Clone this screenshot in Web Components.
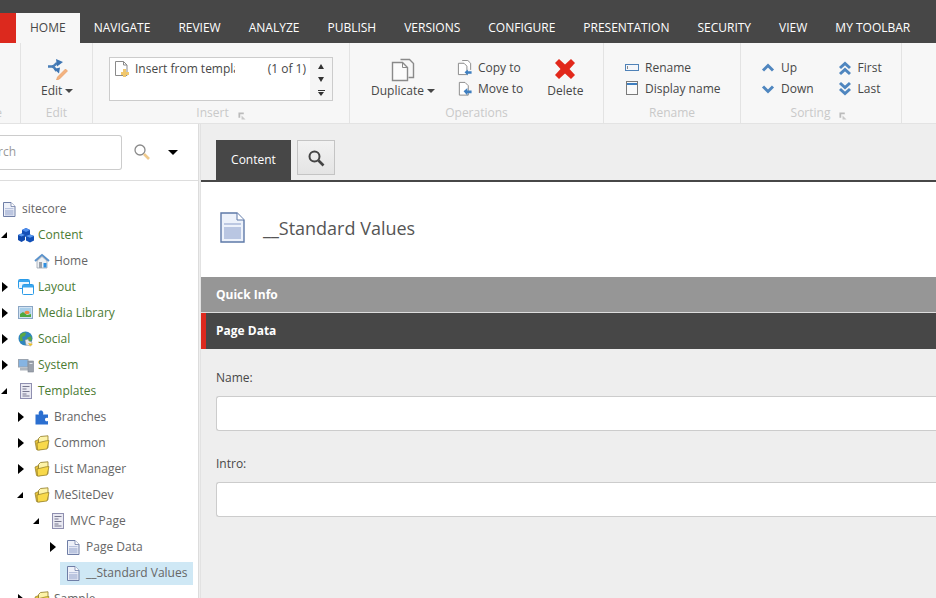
<!DOCTYPE html>
<html lang="en"><head><meta charset="utf-8"><title>Content Editor</title>
<style>
html,body{margin:0;height:100%;overflow:hidden;background:#eee}
body{font:12px/16px "Open Sans",sans-serif;color:#474747}
sc-app{height:598px}
</style></head><body>
<sc-app>
  <sc-tabbar slot="tabs">
    <sc-tab active>HOME</sc-tab><sc-tab>NAVIGATE</sc-tab><sc-tab>REVIEW</sc-tab><sc-tab>ANALYZE</sc-tab><sc-tab>PUBLISH</sc-tab><sc-tab>VERSIONS</sc-tab><sc-tab>CONFIGURE</sc-tab><sc-tab>PRESENTATION</sc-tab><sc-tab>SECURITY</sc-tab><sc-tab>VIEW</sc-tab><sc-tab>MY TOOLBAR</sc-tab>
  </sc-tabbar>
  <sc-ribbon slot="ribbon">
    <sc-group label="Write" w="21" clip></sc-group>
    <sc-group label="Edit" w="72" pad="20">
      <sc-big icon="edit" drop>Edit</sc-big>
    </sc-group>
    <sc-group label="Insert" w="257" launcher pad="16"><sc-gallery></sc-gallery></sc-group>
    <sc-group label="Operations" w="254" pad="21" gap="22">
      <sc-big icon="duplicate" drop>Duplicate</sc-big>
      <sc-col><sc-small icon="copyto">Copy to</sc-small><sc-small icon="moveto">Move to</sc-small></sc-col>
      <sc-big icon="delete" style="margin-left:2px">Delete</sc-big>
    </sc-group>
    <sc-group label="Rename" w="137" pad="20">
      <sc-col><sc-small icon="rename">Rename</sc-small><sc-small icon="display">Display name</sc-small></sc-col>
    </sc-group>
    <sc-group label="Sorting" w="161" launcher lshift="4" pad="19" gap="23">
      <sc-col><sc-small icon="up">Up</sc-small><sc-small icon="down">Down</sc-small></sc-col>
      <sc-col><sc-small icon="first">First</sc-small><sc-small icon="last">Last</sc-small></sc-col>
    </sc-group>
  </sc-ribbon>
  <sc-sidebar slot="side">
    <sc-node icon="doc" label="sitecore" flat>
      <sc-node icon="cubes" label="Content" open root>
        <sc-node icon="home" label="Home"></sc-node>
      </sc-node>
      <sc-node icon="layout" label="Layout" closed root></sc-node>
      <sc-node icon="media" label="Media Library" closed root></sc-node>
      <sc-node icon="globe" label="Social" closed root></sc-node>
      <sc-node icon="system" label="System" closed root></sc-node>
      <sc-node icon="template" label="Templates" open root>
        <sc-node icon="puzzle" label="Branches" closed></sc-node>
        <sc-node icon="folder" label="Common" closed></sc-node>
        <sc-node icon="folder" label="List Manager" closed></sc-node>
        <sc-node icon="folder" label="MeSiteDev" open>
          <sc-node icon="template" label="MVC Page" open>
            <sc-node icon="doc" label="Page Data" closed></sc-node>
            <sc-node icon="doc" label="__Standard Values" selected></sc-node>
          </sc-node>
        </sc-node>
        <sc-node icon="folder" label="Sample" closed></sc-node>
      </sc-node>
    </sc-node>
  </sc-sidebar>
  <sc-editor slot="main">
    <sc-section kind="quick">Quick Info</sc-section>
    <sc-section kind="active">Page Data</sc-section>
    <sc-fields>
      <sc-field label="Name:"></sc-field>
      <sc-field label="Intro:"></sc-field>
    </sc-fields>
  </sc-editor>
</sc-app>
<script>
const ICONS={
edit:'<svg width="21" height="22" viewBox="1 0 21 22"><path d="M2 8.500h4c2 0 3-2 5-3.500" fill="none" stroke="#4a7fb8" stroke-width="2.600"/><path d="M6 8.500c2 0 3 2 4.500 4.500" fill="none" stroke="#4a7fb8" stroke-width="2.600"/><path d="M10 1l7 3-6 4.500zM8 11l6-1.500-1 6z" fill="#3f76b3"/><path d="M19.500 11l2 2-8 8-3 1 1-3z" fill="#f3b27f" stroke="#e59a5e" stroke-width=".6"/></svg>',
duplicate:'<svg width="24" height="24" viewBox="0 0 24 24"><path d="M9.500 1.500h9l4 4v14h-5" fill="#f7f7f7" stroke="#8a8a8a" stroke-width="1.400"/><path d="M1.500 4.500h10l5 5v13h-15z" fill="#fbfbfb" stroke="#8a8a8a" stroke-width="1.400"/><path d="M11.500 4.500v5h5" fill="none" stroke="#8a8a8a"/></svg>',
copyto:'<svg width="16" height="16" viewBox="0 0 17 17"><path d="M5.500 .5h6l3 3v7" fill="#fff" stroke="#888"/><path d="M1.500 3.500h6l3 3v9h-9z" fill="#fff" stroke="#888"/><path d="M8 13l3.500-3v2h4v2.500h-4v2z" fill="#3f7fc0"/></svg>',
moveto:'<svg width="16" height="16" viewBox="0 0 17 17"><path d="M2.500 1.500h6l3.500 3.500v10h-9.500z" fill="#fff" stroke="#888"/><path d="M7 11l4-3.500V10h4.500v3H11v2.500z" fill="#3f7fc0"/></svg>',
delete:'<svg width="22" height="22" viewBox="0 0 22 22"><path d="M5 1l6 5.500L17 1l4 4-5.500 6 5.500 6-4 4-6-5.500L5 21l-4-4 5.500-6L1 5z" fill="#e2281b"/></svg>',
rename:'<svg width="16" height="16" viewBox="0 0 16 16"><rect x="1.500" y="4.500" width="13" height="6" fill="#f4f6fa" stroke="#4f82b8"/><path d="M3.500 6v3" stroke="#888"/></svg>',
display:'<svg width="16" height="16" viewBox="0 0 16 16"><rect x="2.500" y=".5" width="11" height="13" fill="#fafafa" stroke="#7a7a7a"/><rect x="3" y="2" width="10" height="2" fill="#3f7fc0"/></svg>',
up:'<svg width="16" height="16" viewBox="0 0 16 16"><path d="M3 10.500L8 5.500l5 5" fill="none" stroke="#4f86bf" stroke-width="3"/></svg>',
down:'<svg width="16" height="16" viewBox="0 0 16 16"><path d="M3 5.500L8 10.500l5-5" fill="none" stroke="#4f86bf" stroke-width="3"/></svg>',
first:'<svg width="16" height="16" viewBox="0 0 16 16"><path d="M3 8L8 3.500 13 8M3 14L8 9.500 13 14" fill="none" stroke="#4f86bf" stroke-width="3"/></svg>',
last:'<svg width="16" height="16" viewBox="0 0 16 16"><path d="M3 2L8 6.500 13 2M3 8L8 12.500 13 8" fill="none" stroke="#4f86bf" stroke-width="3"/></svg>',
doc:'<svg width="16" height="16" viewBox="0 0 16 16"><path d="M1.500 1.500h7.500l4 4v10H1.500z" fill="#eef1f9" stroke="#6f7ea6"/><path d="M9 1.500v4h4" fill="#fff" stroke="#6f7ea6" stroke-width=".8"/><rect x="3" y="7" width="8.500" height="1.200" fill="#b9c3de"/><rect x="3" y="9" width="8.500" height="5.500" fill="#bcc6e0"/></svg>',
cubes:'<svg width="16" height="16" viewBox="0 0 16 16"><path d="M4 3l4-2 4 2v5l-4 2-4-2z" fill="#1450b8"/><path d="M4 3l4 2 4-2-4-2z" fill="#4f8fee"/><path d="M0 8l3.500-1.500L7 8v5l-3.500 2L0 13z" fill="#0f49ad"/><path d="M0 8l3.500 1.500L7 8 3.500 6.500z" fill="#5a99f0"/><path d="M8 9l4-1.500L16 9v4.500L12 15.500l-4-2z" fill="#1150b8"/><path d="M8 9l4 1.800L16 9l-4-1.500z" fill="#5a99f0"/></svg>',
home:'<svg width="16" height="16" viewBox="0 0 16 16"><path d="M1 8l7-6 7 6" fill="none" stroke="#5b93cc" stroke-width="2"/><path d="M3 8l5-4.500L13 8v7H3z" fill="#eef1f4" stroke="#8d9aa8" stroke-width=".7"/><rect x="5" y="9" width="3" height="6" fill="#9aa2ab"/><rect x="9.500" y="10" width="3" height="4.500" fill="#2f8fe0"/></svg>',
layout:'<svg width="16" height="16" viewBox="0 0 16 16"><rect x=".5" y=".5" width="11" height="9" rx="1" fill="#eaf6fe" stroke="#2a9be8"/><rect x="1" y="1" width="10" height="2" fill="#3aa6ee"/><rect x="4.500" y="5.500" width="11" height="10" rx="1" fill="#fff" stroke="#2a9be8"/><rect x="5" y="6" width="10" height="2.500" fill="#3aa6ee"/></svg>',
media:'<svg width="16" height="16" viewBox="0 0 16 16"><rect x=".5" y="1.500" width="14" height="12" fill="#d2e3f3" stroke="#8aa6c4"/><rect x="2" y="3" width="11" height="6" fill="#a9cfea"/><path d="M2 12V9l3-2 4 3 4-1v3z" fill="#4fa83f"/><ellipse cx="9" cy="7.500" rx="2.500" ry="1.800" fill="#f0873a"/></svg>',
globe:'<svg width="16" height="16" viewBox="0 0 16 16"><circle cx="7.500" cy="7.500" r="7" fill="#2f86bd"/><path d="M2 4c2-2 4-3 6-2l-1 3-3 1 1 4-3 0zM9 7l4-2 1 4-4 2z" fill="#5aa845"/><path d="M7 9l3-1 1 2 3 1-1 4-5-1z" fill="#e8e8e8" stroke="#8a8a8a" stroke-width=".5"/><path d="M10 12l5 1-3 2z" fill="#f2c21f"/></svg>',
system:'<svg width="16" height="16" viewBox="0 0 16 16"><rect x=".5" y="2.500" width="9.500" height="7.500" fill="#86b4e2" stroke="#9aa4b0"/><rect x="2" y="10.500" width="8" height="3" fill="#b0b6bd"/><rect x="10" y="4" width="5.500" height="11" fill="#9aa1ab" stroke="#7c8490" stroke-width=".6"/><rect x="11.500" y="6" width="3" height="1" fill="#dfe3e8"/></svg>',
template:'<svg width="16" height="16" viewBox="0 0 16 16"><rect x="2.500" y=".5" width="11" height="15" fill="#e9e9f2" stroke="#8f8fb0"/><path d="M4.500 3.500h7M4.500 6h4M4.500 8.500h7M4.500 11h4M4.500 13h7" stroke="#77778f"/></svg>',
puzzle:'<svg width="16" height="16" viewBox="0 0 16 16"><path d="M1.500 5.500h3.500c-1-2 .5-4 2-4s3 2 2 4h5V9c-2-.8-3 .2-3 1.500s1 2.300 3 1.500v3.500H1.500z" fill="#2b6fd0"/></svg>',
folder:'<svg width="16" height="16" viewBox="0 0 16 16"><path d="M1 6l3.500-1.500V14.500H2.500z" fill="#e5c23a" stroke="#8f7a25" stroke-width=".7"/><path d="M4.500 3.500l2-2 7.500-.7v12l-9.500 2.200z" fill="#fdf3a8" stroke="#8f7a25" stroke-width=".8"/><path d="M3 8l9-2.200 3-.2-2 8.400-9.500 1.200z" fill="#f8d94a" stroke="#8f7a25" stroke-width=".7"/></svg>',
insert:'<svg width="16" height="16" viewBox="0 0 16 16"><path d="M1.500 .5h8l3.500 3.500v10.500H1.500z" fill="#fff" stroke="#8a8a8a"/><path d="M9.500 .5V4H13" fill="none" stroke="#8a8a8a"/><path d="M9 8h3v3h3v3h-3v2H9v-2H7v-3h2z" fill="#f0c76d"/></svg>',
launcher:'<svg width="8" height="8" viewBox="0 0 9 9"><path d="M.5 .5h6v2h-4v4h-2z" fill="#bbb"/><path d="M4 4l4.500 4.500H4z" fill="#c9c9c9"/></svg>',
search:'<svg width="18" height="18" viewBox="0 0 18 18"><circle cx="7" cy="7" r="5" fill="#fff" fill-opacity=".4" stroke="#8a8a8a" stroke-width="1.300"/><path d="M11 11l5 5" stroke="#efc98c" stroke-width="2.600"/></svg>',
searchdark:'<svg width="18" height="18" viewBox="0 0 18 18"><circle cx="7.500" cy="7.500" r="5" fill="none" stroke="#444" stroke-width="2"/><path d="M11.500 11.500l5 5" stroke="#444" stroke-width="2.600"/></svg>',
bigdoc:'<svg width="25" height="31" viewBox="0 0 25 31"><path d="M1 1h16l7 7v22H1z" fill="#edf2fb" stroke="#5e79a8" stroke-width="1.400"/><path d="M17 1v7h7" fill="#fff" stroke="#5e79a8"/><rect x="4" y="11" width="17" height="2" fill="#bcc8e2"/><rect x="4" y="15" width="17" height="12" fill="#b9c6e2"/></svg>'
};
function def(name,css,html,extra){
  customElements.define(name,class extends HTMLElement{
    constructor(){super();this.attachShadow({mode:'open'})}
    connectedCallback(){
      this.shadowRoot.innerHTML='<style>'+css+'</style>'+(typeof html==='function'?html(this):html);
      if(extra)extra(this);
    }
  });
}
const a=(e,n,d='')=>e.getAttribute(n)??d;
def('sc-app',`:host{display:grid;grid-template-rows:13px 30px 81px 1fr;grid-template-columns:198px 3px 1fr;overflow:hidden}
.top{grid-column:1/4;background:#474747}
.tabs{grid-column:1/4}.rib{grid-column:1/4}
.split{background:linear-gradient(90deg,#dcdcdc 0 1px,#eee 1px 2px,#e2e2e2 2px)}
.side{min-width:0;overflow:hidden;background:#fff}.main{min-width:0;overflow:hidden}`,
`<div class="top"></div><div class="tabs"><slot name="tabs"></slot></div><div class="rib"><slot name="ribbon"></slot></div><div class="side"><slot name="side"></slot></div><div class="split"></div><div class="main"><slot name="main"></slot></div>`);
def('sc-tabbar',`:host{display:flex;height:30px;background:#474747}.logo{width:16px;background:#dc291e}`,`<div class="logo"></div><slot></slot>`);
def('sc-tab',`:host{display:flex;align-items:center;padding:0 14px;color:#fff;font-size:12px;white-space:nowrap}
:host([active]){background:#f7f7f7;color:#474747}`,`<slot></slot>`);
def('sc-ribbon',`:host{display:flex;height:81px;box-sizing:border-box;background:#f7f7f7;border-bottom:1px solid #e3e3e3}`,`<slot></slot>`);
def('sc-group',`:host{display:flex;flex-direction:column;flex:none;box-sizing:border-box;border-right:1px solid #e3e3e3;height:80px;overflow:hidden}
.c{flex:1;display:flex;align-items:flex-start;padding-top:14px;min-height:0}
.l{height:18px;flex:none;display:flex;justify-content:center;align-items:flex-start;gap:9px;color:#c9c9c9;font-size:12px;line-height:16px;white-space:nowrap}
.l.clip{justify-content:flex-end;padding-right:18px}
.l span{flex:none}
svg{margin-top:7px;flex:none}`,
e=>`<div class="c" style="padding-left:${a(e,'pad','0')}px;gap:${a(e,'gap','0')}px"><slot></slot></div><div class="l${e.hasAttribute('clip')?' clip':''}" style="margin-right:${a(e,'lshift','0')}px"><span>${a(e,'label')}</span>${e.hasAttribute('launcher')?ICONS.launcher:''}</div>`,
e=>{e.style.width=a(e,'w')+'px'});
def('sc-big',`:host{display:flex;flex-direction:column;align-items:center;white-space:nowrap;color:#474747}
.i{height:25px;display:flex;justify-content:center;align-items:flex-start;margin-top:1px}
.t{display:flex;align-items:center;gap:3px;height:16px}
.d{width:0;height:0;border:4px solid transparent;border-top-color:#474747;border-bottom:0}`,
e=>`<div class="i">${ICONS[a(e,'icon')]}</div><div class="t"><slot></slot>${e.hasAttribute('drop')?'<span class="d"></span>':''}</div>`);
def('sc-col',`:host{display:flex;flex-direction:column;gap:5px;padding-top:3px}`,`<slot></slot>`);
def('sc-small',`:host{display:flex;align-items:center;gap:5px;height:16px;white-space:nowrap;color:#474747}svg{display:block}`,
e=>`${ICONS[a(e,'icon')]}<slot></slot>`);
def('sc-gallery',`:host{display:flex;width:224px;height:44px;box-sizing:border-box;border:1px solid #ccc;background:#fff}
.m{flex:1;display:flex;padding:2px 1px 0 4px;min-width:0}
.n{width:100px;overflow:hidden;white-space:nowrap;margin-left:5px;line-height:17px}
.p{margin-left:auto;white-space:nowrap;padding-right:3px;line-height:17px}
svg{flex:none;margin-top:1px}
.s{width:22px;background:#f5f5f5;display:flex;flex-direction:column;align-items:center;gap:8px;padding-top:6px;box-sizing:border-box}
.u,.v{width:0;height:0;border:3.500px solid transparent}
.u{border-bottom:5px solid #333;border-top:0}.v{border-top:5px solid #333;border-bottom:0}
.e{width:7px;border-top:1px solid #333;position:relative;height:5px}
.e:after{content:"";position:absolute;left:0;top:1px;border:3.500px solid transparent;border-top:4px solid #333;border-bottom:0}`,
`<div class="m">${ICONS.insert}<span class="n">Insert from template</span><span class="p">(1 of 1)</span></div><div class="s"><span class="u"></span><span class="v"></span><span class="e"></span></div>`);
def('sc-sidebar',`:host{display:block;height:100%;background:#fff}
.b{display:flex;align-items:center;height:57px;box-sizing:border-box;border-bottom:1px solid #ddd}
.inp{flex:none;width:122px;height:35px;box-sizing:border-box;border:1px solid #ccc;border-left:0;border-radius:0 3px 3px 0;display:flex;align-items:center;justify-content:flex-end;overflow:hidden;color:#999;padding-right:105px}
.inp span{flex:none}
.g{margin-left:11px;display:flex}
.d{margin-left:17px;width:0;height:0;border:5px solid transparent;border-top:5px solid #000;border-bottom:0}
.t{padding:15px 0 0 2px}`,
`<div class="b"><div class="inp"><span>Search</span></div><div class="g">${ICONS.search}</div><div class="d"></div></div><div class="t"><slot></slot></div>`);
def('sc-node',`:host{display:block}
.r{display:flex;align-items:center;height:26px;white-space:nowrap}
.tg{flex:none;width:16px;margin-left:-16px;display:flex;align-items:center;height:26px}
.ri{width:0;height:0;border:5px solid transparent;border-left:6px solid #000;border-right:0}
.op{width:0;height:0;border-style:solid;border-width:0 0 6px 6px;border-color:transparent transparent #000 transparent;margin-left:-1px}
.w{display:flex;align-items:center;gap:4px;height:23px;margin-left:-6px;padding:0 6px;color:#666}
:host([root]) .w{color:#4b7b33}
:host([selected]) .w{background:#cfe8f5}
svg{flex:none;display:block}
.k{padding-left:16px}`,
e=>`<div class="r"><span class="tg">${e.hasAttribute('closed')?'<span class="ri"></span>':e.hasAttribute('open')?'<span class="op"></span>':''}</span><div class="w">${ICONS[a(e,'icon')]}<span>${a(e,'label')}</span></div></div><div class="k"><slot></slot></div>`);
def('sc-editor',`:host{display:block;height:100%;background:#eee}
.st{display:flex;align-items:flex-start;gap:6px;box-sizing:border-box;padding:16px 0 0 15px;border-bottom:2px solid #474747;height:58px}
.c{width:75px;height:40px;background:#474747;color:#fff;display:flex;align-items:center;justify-content:center}
.s{width:38px;height:35px;box-sizing:border-box;border:1px solid #c4c4c4;background:linear-gradient(#f2f2f2,#e4e4e4);display:flex;align-items:center;justify-content:center}
.h{height:95px;background:#fff;display:flex;align-items:center;gap:18px;padding-left:19px;box-sizing:border-box;font-size:18px;color:#555}
.h svg{flex:none;margin-top:-4px}.h span{margin-top:-4px;line-height:24px}`,
`<div class="st"><div class="c">Content</div><div class="s">${ICONS.searchdark}</div></div><div class="h">${ICONS.bigdoc}<span>__Standard Values</span></div><slot></slot>`);
def('sc-section',`:host{display:flex;align-items:center;box-sizing:border-box;font-weight:700;color:#fff;padding-left:15px}
:host([kind=quick]){height:36px;background:#969696;border-bottom:1px solid #ddd}
:host([kind=active]){height:36px;background:#474747;border-left:5px solid #dc291e;padding-left:10px}`,`<slot></slot>`);
def('sc-fields',`:host{display:flex;flex-direction:column;gap:24px;padding:20px 0 0 15px}`,`<slot></slot>`);
def('sc-field',`:host{display:block}
.l{height:18px;line-height:18px;margin-bottom:9px}
.i{height:35px;box-sizing:border-box;background:#fff;border:1px solid #ccc;border-right:0;border-radius:3px 0 0 3px}`,
e=>`<div class="l">${a(e,'label')}</div><div class="i"></div>`);
</script>
</body></html>
